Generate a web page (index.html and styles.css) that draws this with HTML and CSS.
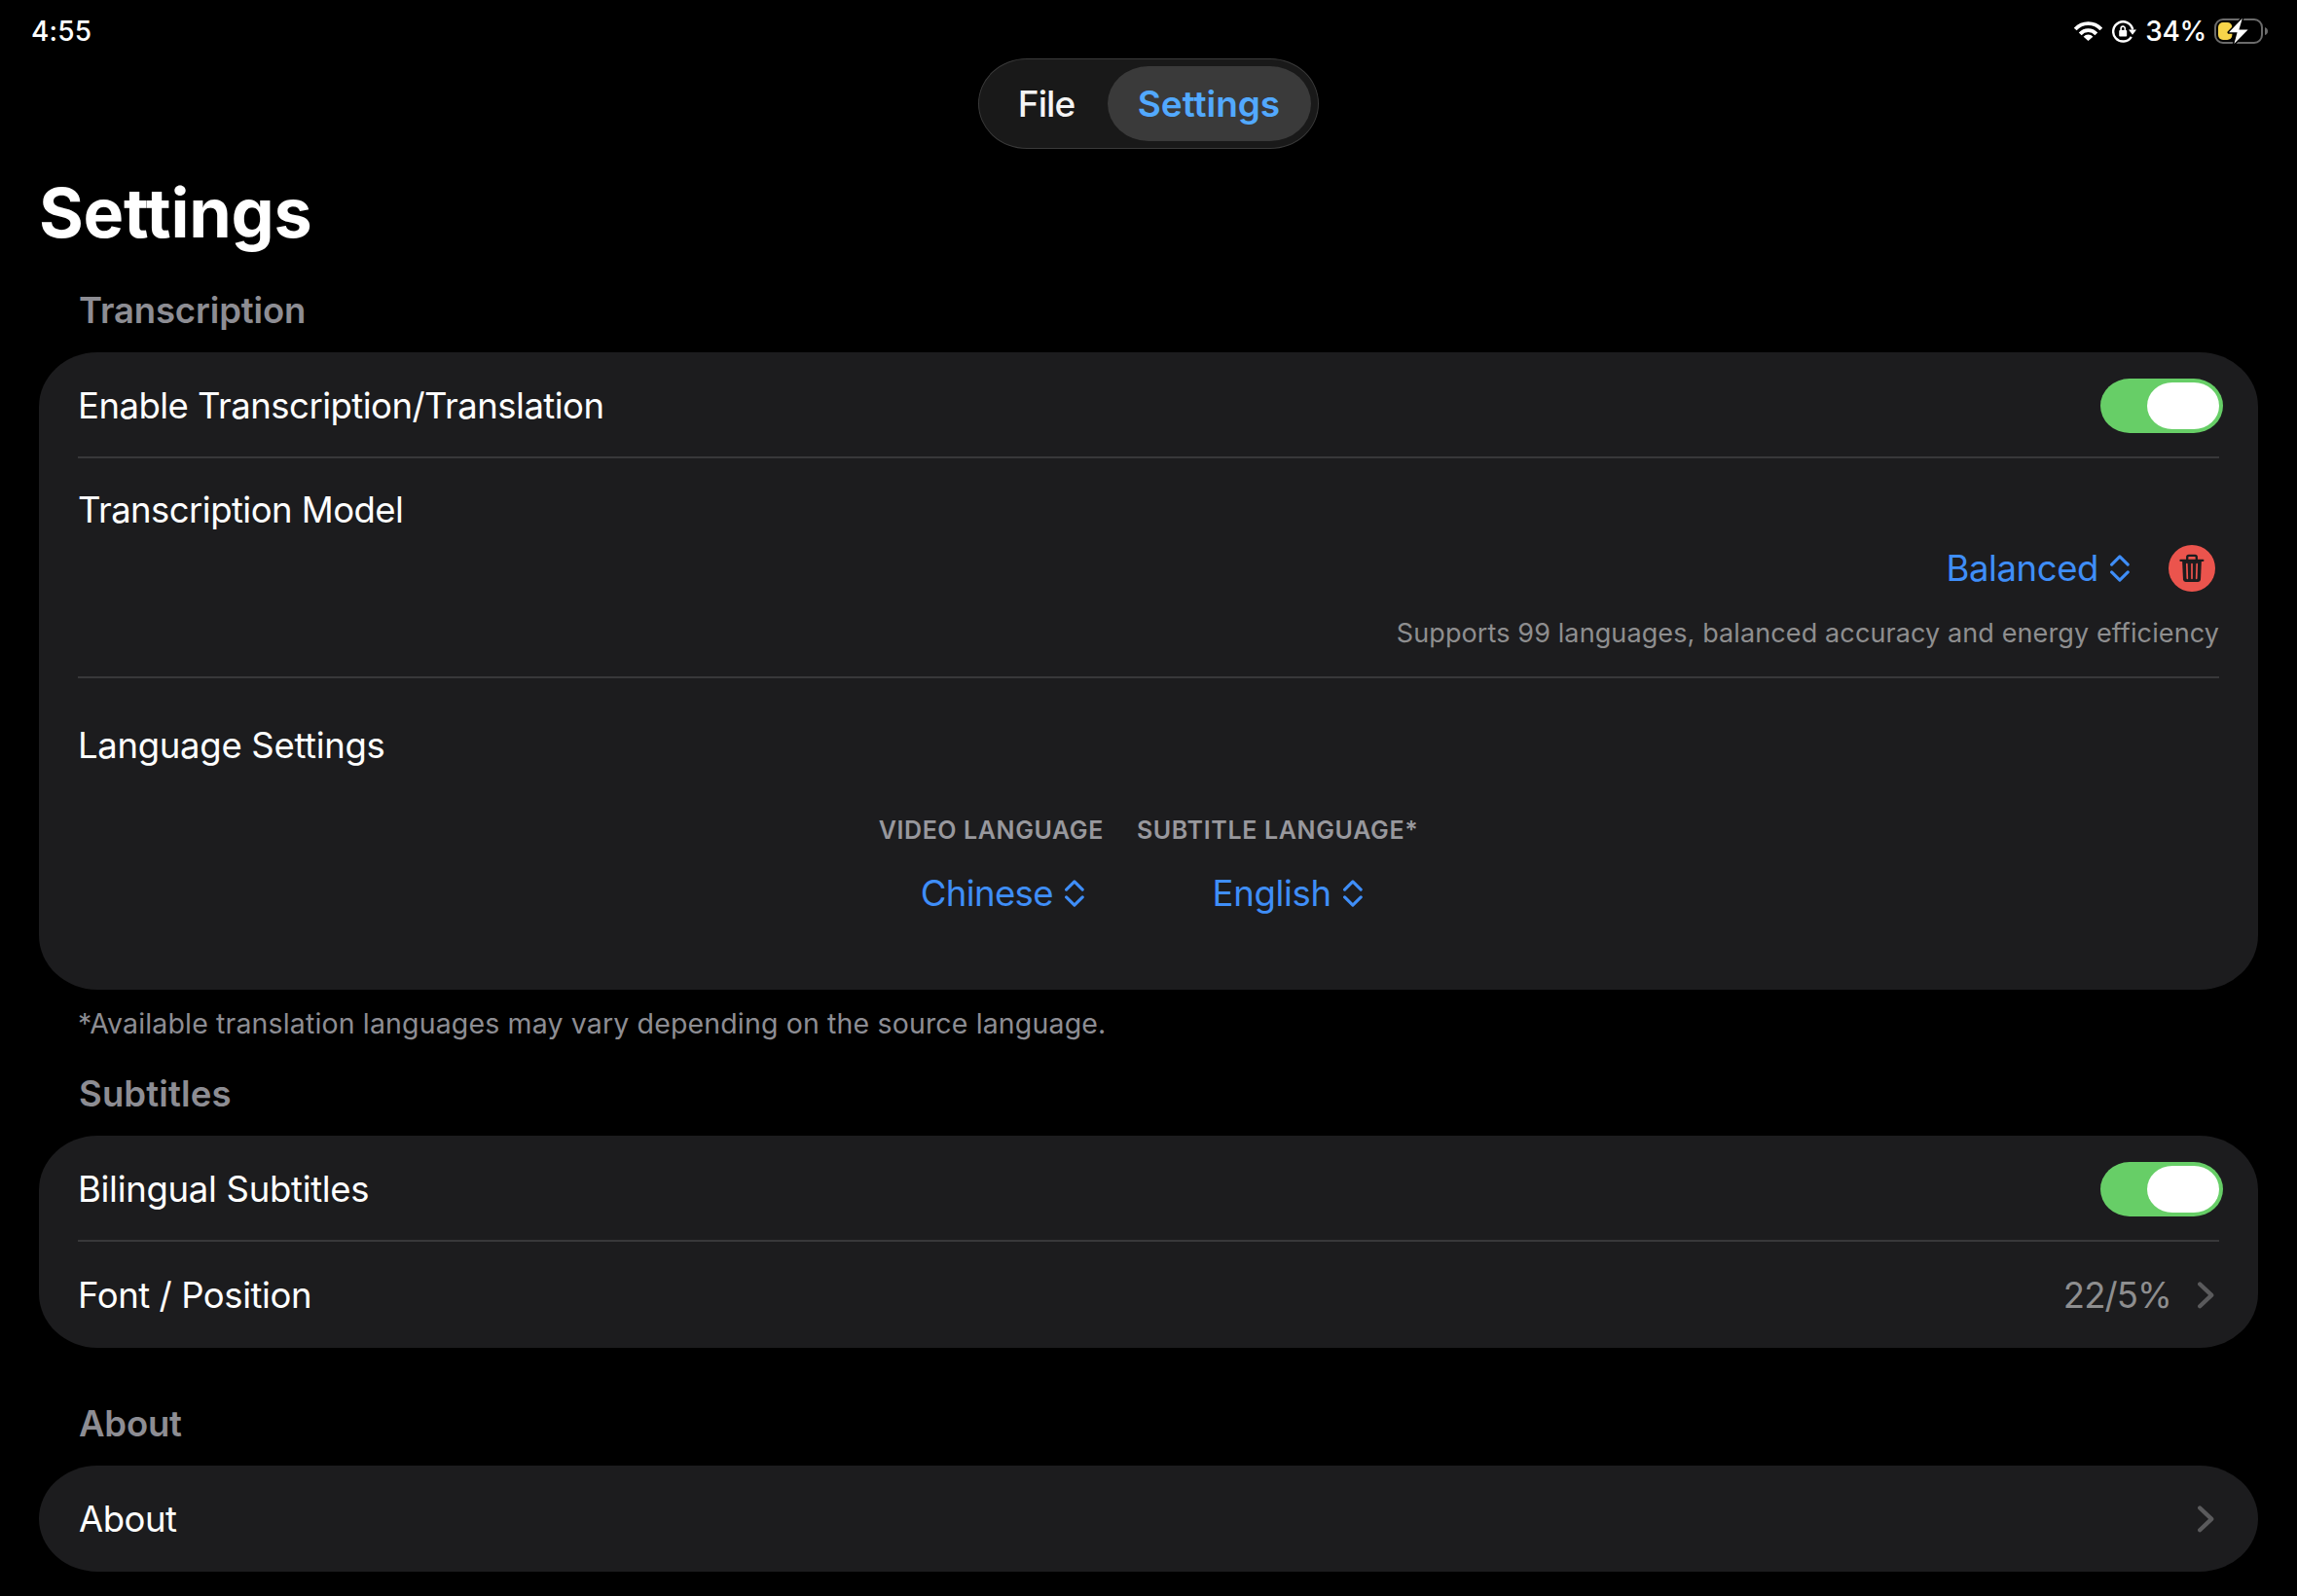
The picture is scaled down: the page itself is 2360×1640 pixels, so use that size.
FILE: index.html
```html
<!DOCTYPE html>
<html lang="en">
<head>
<meta charset="utf-8">
<title>Settings</title>
<link rel="stylesheet" href="styles.css">
</head>
<body>
<svg width="0" height="0" class="defs" aria-hidden="true">
  <symbol id="updown" viewBox="0 0 20 28">
    <path d="M1.6 10.1 9.9 1.8 18.2 10.1M1.6 17.9 9.9 26.2 18.2 17.9" fill="none" stroke="currentColor" stroke-width="3.1" stroke-linecap="round" stroke-linejoin="round"/>
  </symbol>
  <symbol id="chevron" viewBox="0 0 17 28">
    <path d="M2.2 2.5 14.2 13.9 2.2 25.3" fill="none" stroke="currentColor" stroke-width="4.3" stroke-linecap="round" stroke-linejoin="round"/>
  </symbol>
</svg>

<header class="status">
  <time class="status-time">4:55</time>
  <div class="status-right">
    <svg class="wifi" width="29" height="20" viewBox="0 0 29 20">
      <path d="M1.2 8A18 18 0 0 1 27.8 8M6.2 12.9A11.2 11.2 0 0 1 22.8 12.9" fill="none" stroke="#fff" stroke-width="3.8"/>
      <path d="M14.5 20 9.6 15.8A6.6 6.6 0 0 1 19.4 15.8Z" fill="#fff"/>
    </svg>
    <svg class="lock" width="25" height="23" viewBox="0 0 25 23">
      <path d="M21.2 9.5A10.1 10.1 0 1 0 19.8 16.9" fill="none" stroke="#fff" stroke-width="2.4"/>
      <path d="M17 9.4H25L21 14.8Z" fill="#fff"/>
      <rect x="7.2" y="10.1" width="8" height="6.5" rx="1" fill="#fff"/>
      <path d="M9.1 10.8V8.2A2.1 2.1 0 0 1 13.3 8.2V10.8" fill="none" stroke="#fff" stroke-width="1.6"/>
    </svg>
    <span class="status-percent">34%</span>
    <svg class="battery" width="56" height="28" viewBox="0 0 56 28">
      <rect x="1" y="2" width="48" height="24" rx="8" fill="none" stroke="#6b6b6b" stroke-width="2"/>
      <path d="M52 10Q55 11 55 14T52 18Z" fill="#6b6b6b"/>
      <rect x="4" y="5" width="14.4" height="18" rx="5" fill="#f8d54a"/>
      <path d="M28.9 0.8 15 15.3H23.6L20.4 27 34.6 12.4H25.4Z" fill="#fff" stroke="#000" stroke-width="3" stroke-linejoin="round" paint-order="stroke"/>
    </svg>
  </div>
</header>

<nav class="tabs">
  <a class="tab">File</a>
  <a class="tab tab-active">Settings</a>
</nav>

<main class="page">
  <h1 class="title">Settings</h1>

  <section class="group">
    <h2 class="heading">Transcription</h2>
    <div class="card">
      <div class="row">
        <span class="label track-enable">Enable Transcription/Translation</span>
        <span class="switch"><span class="knob"></span></span>
      </div>
      <div class="block model">
        <span class="label track-model">Transcription Model</span>
        <div class="model-controls">
          <span class="picker"><span class="track-balanced">Balanced</span><svg class="updown"><use href="#updown"/></svg></span>
          <svg class="trash" width="48" height="48" viewBox="0 0 48 48">
            <circle cx="24" cy="24" r="24" fill="#eb544d"/>
            <g fill="none" stroke="#1c1c1e" stroke-width="2.3" stroke-linecap="round">
              <path d="M12.5 15.9H35.3"/>
              <path d="M19.2 15.5V12.4Q19.2 10.8 20.8 10.8H27.2Q28.8 10.8 28.8 12.4V15.5"/>
            </g>
            <path d="M14.1 16.5H33.9L33 35.6Q32.8 38 30.4 38H17.6Q15.2 38 15 35.6Z" fill="#1c1c1e"/>
            <path d="M18.8 19.6 19.3 34.3M24 19.6V34.3M29.2 19.6 28.7 34.3" fill="none" stroke="#eb544d" stroke-width="1.7" stroke-linecap="round"/>
          </svg>
        </div>
        <p class="description">Supports 99 languages, balanced accuracy and energy efficiency</p>
      </div>
      <div class="block language">
        <span class="label track-language">Language Settings</span>
        <div class="columns">
          <div class="column">
            <span class="caption">VIDEO LANGUAGE</span>
            <span class="picker"><span class="track-chinese">Chinese</span><svg class="updown"><use href="#updown"/></svg></span>
          </div>
          <div class="column column-subtitle">
            <span class="caption caption-subtitle">SUBTITLE LANGUAGE*</span>
            <span class="picker"><span class="track-english">English</span><svg class="updown"><use href="#updown"/></svg></span>
          </div>
        </div>
      </div>
    </div>
    <p class="footnote">*Available translation languages may vary depending on the source language.</p>
  </section>

  <section class="group group-subtitles">
    <h2 class="heading track-subtitles">Subtitles</h2>
    <div class="card">
      <div class="row">
        <span class="label track-bilingual">Bilingual Subtitles</span>
        <span class="switch"><span class="knob"></span></span>
      </div>
      <div class="row">
        <span class="label track-font">Font / Position</span>
        <span class="link"><span class="value">22/5%</span><svg class="chevron"><use href="#chevron"/></svg></span>
      </div>
    </div>
  </section>

  <section class="group group-about">
    <h2 class="heading track-about-heading">About</h2>
    <div class="card card-single">
      <div class="row">
        <span class="label track-about">About</span>
        <span class="link"><svg class="chevron"><use href="#chevron"/></svg></span>
      </div>
    </div>
  </section>
</main>
</body>
</html>
```
FILE: styles.css
```css
* { box-sizing: border-box; }

body {
  margin: 0;
  min-height: 1640px;
  background: #000;
  color: #fff;
  font-family: Inter, "Liberation Sans", sans-serif;
  font-size: 36.5px;
  line-height: 44px;
  white-space: nowrap;
}

h1, h2, p { margin: 0; }
svg { display: block; flex: none; }
.defs { position: absolute; }

/* Status bar */
.status {
  display: flex;
  justify-content: space-between;
  height: 60px;
  padding: 15px 29px 0 32px;
  font-size: 28px;
  font-weight: 450;
  line-height: 34px;
}
.status-time { letter-spacing: 0.2px; }
.status-right { display: flex; align-items: center; height: 34px; }
.lock { margin-left: 10px; }
.status-percent { margin-left: 9px; letter-spacing: -0.3px; }
.battery { margin-left: 8px; }

/* Tab switcher */
.tabs {
  display: flex;
  width: 350px;
  height: 93px;
  margin: 0 auto;
  padding: 7px;
  border: 1px solid #3a3a3a;
  border-radius: 50px / 46.5px;
  background: #191919;
}
.tab {
  flex: 1;
  display: flex;
  align-items: center;
  justify-content: center;
  padding: 1px 1px 0 0;
  font-size: 37px;
  font-weight: 500;
  color: #f4f4f4;
  letter-spacing: -0.95px;
}
.tab-active {
  flex: 0 0 209px;
  border-radius: 42px / 38.5px;
  background: #3a3a3a;
  color: #52a9ff;
  font-weight: 600;
  letter-spacing: -0.05px;
}

/* Page */
.page { padding: 23px 40px 25px; }
.title {
  font-size: 70px;
  font-weight: 700;
  line-height: 85px;
  letter-spacing: -0.22px;
}
.group { margin-top: 36px; }
.group-subtitles { margin-top: 33px; }
.group-about { margin-top: 56px; }
.heading {
  padding-left: 41px;
  margin-bottom: 21px;
  font-size: 36.5px;
  font-weight: 600;
  color: #8d8d93;
  letter-spacing: -0.13px;
}
.card {
  border-radius: 60px / 56px;
  background: #1c1c1e;
}
.card-single { border-radius: 60px / 54.5px; }

.row {
  display: flex;
  align-items: center;
  justify-content: space-between;
  height: 109px;
  margin: 0 40px;
  padding-top: 1px;
}
.row:not(:last-child),
.model { box-shadow: inset 0 -2px #38383a; }
.block { display: flex; flex-direction: column; margin: 0 40px; }

/* Switch */
.switch {
  display: flex;
  justify-content: flex-end;
  width: 126px;
  height: 56px;
  margin-right: -4px;
  padding: 4px;
  border-radius: 30px / 28px;
  background: #67ce67;
}
.knob { width: 74px; border-radius: 26px / 24px; background: #fff; }

/* Model */
.model { height: 226px; padding-top: 31px; }
.model-controls {
  display: flex;
  align-items: center;
  justify-content: flex-end;
  gap: 40px;
  height: 48px;
  margin-top: 14px;
  padding-right: 4px;
}
.picker { display: flex; align-items: center; gap: 12px; color: #3f8ef8; }
.updown { width: 20px; height: 28px; }
.description {
  margin-top: 26px;
  font-size: 27px;
  line-height: 33px;
  letter-spacing: 0.11px;
  text-align: right;
  color: #8e8e8f;
}

/* Language */
.language { height: 320px; padding-top: 47px; }
.columns { display: flex; justify-content: center; gap: 34px; margin-top: 50px; }
.column { display: flex; flex-direction: column; align-items: center; gap: 28px; }
.column .picker { padding-left: 23px; }
.column-subtitle .picker { padding-left: 20px; }
.caption {
  font-size: 25px;
  font-weight: 600;
  line-height: 30px;
  letter-spacing: 0.6px;
  color: #98989d;
}
.caption-subtitle { letter-spacing: 0.65px; }

.footnote {
  margin-top: 17px;
  padding-left: 40px;
  font-size: 28.5px;
  line-height: 35px;
  letter-spacing: 0.148px;
  color: #8d8d93;
}

/* Disclosure rows */
.link { display: flex; align-items: center; gap: 27px; padding-right: 5px; }
.value { color: #8e8e8f; letter-spacing: -0.9px; }
.chevron { width: 17px; height: 28px; color: #5a5a5c; }

/* Tracking */
.track-enable { letter-spacing: -0.52px; }
.track-model { letter-spacing: -0.55px; }
.track-language { letter-spacing: -0.31px; }
.track-bilingual { letter-spacing: -0.3px; }
.track-font { letter-spacing: -0.43px; }
.track-balanced { letter-spacing: -0.4px; }
.track-chinese { letter-spacing: -0.61px; }
.track-english { letter-spacing: -0.33px; }
.track-subtitles { letter-spacing: 0.14px; }
.track-about-heading { letter-spacing: -0.2px; }
.track-about { padding-left: 1px; letter-spacing: -0.5px; }
```
